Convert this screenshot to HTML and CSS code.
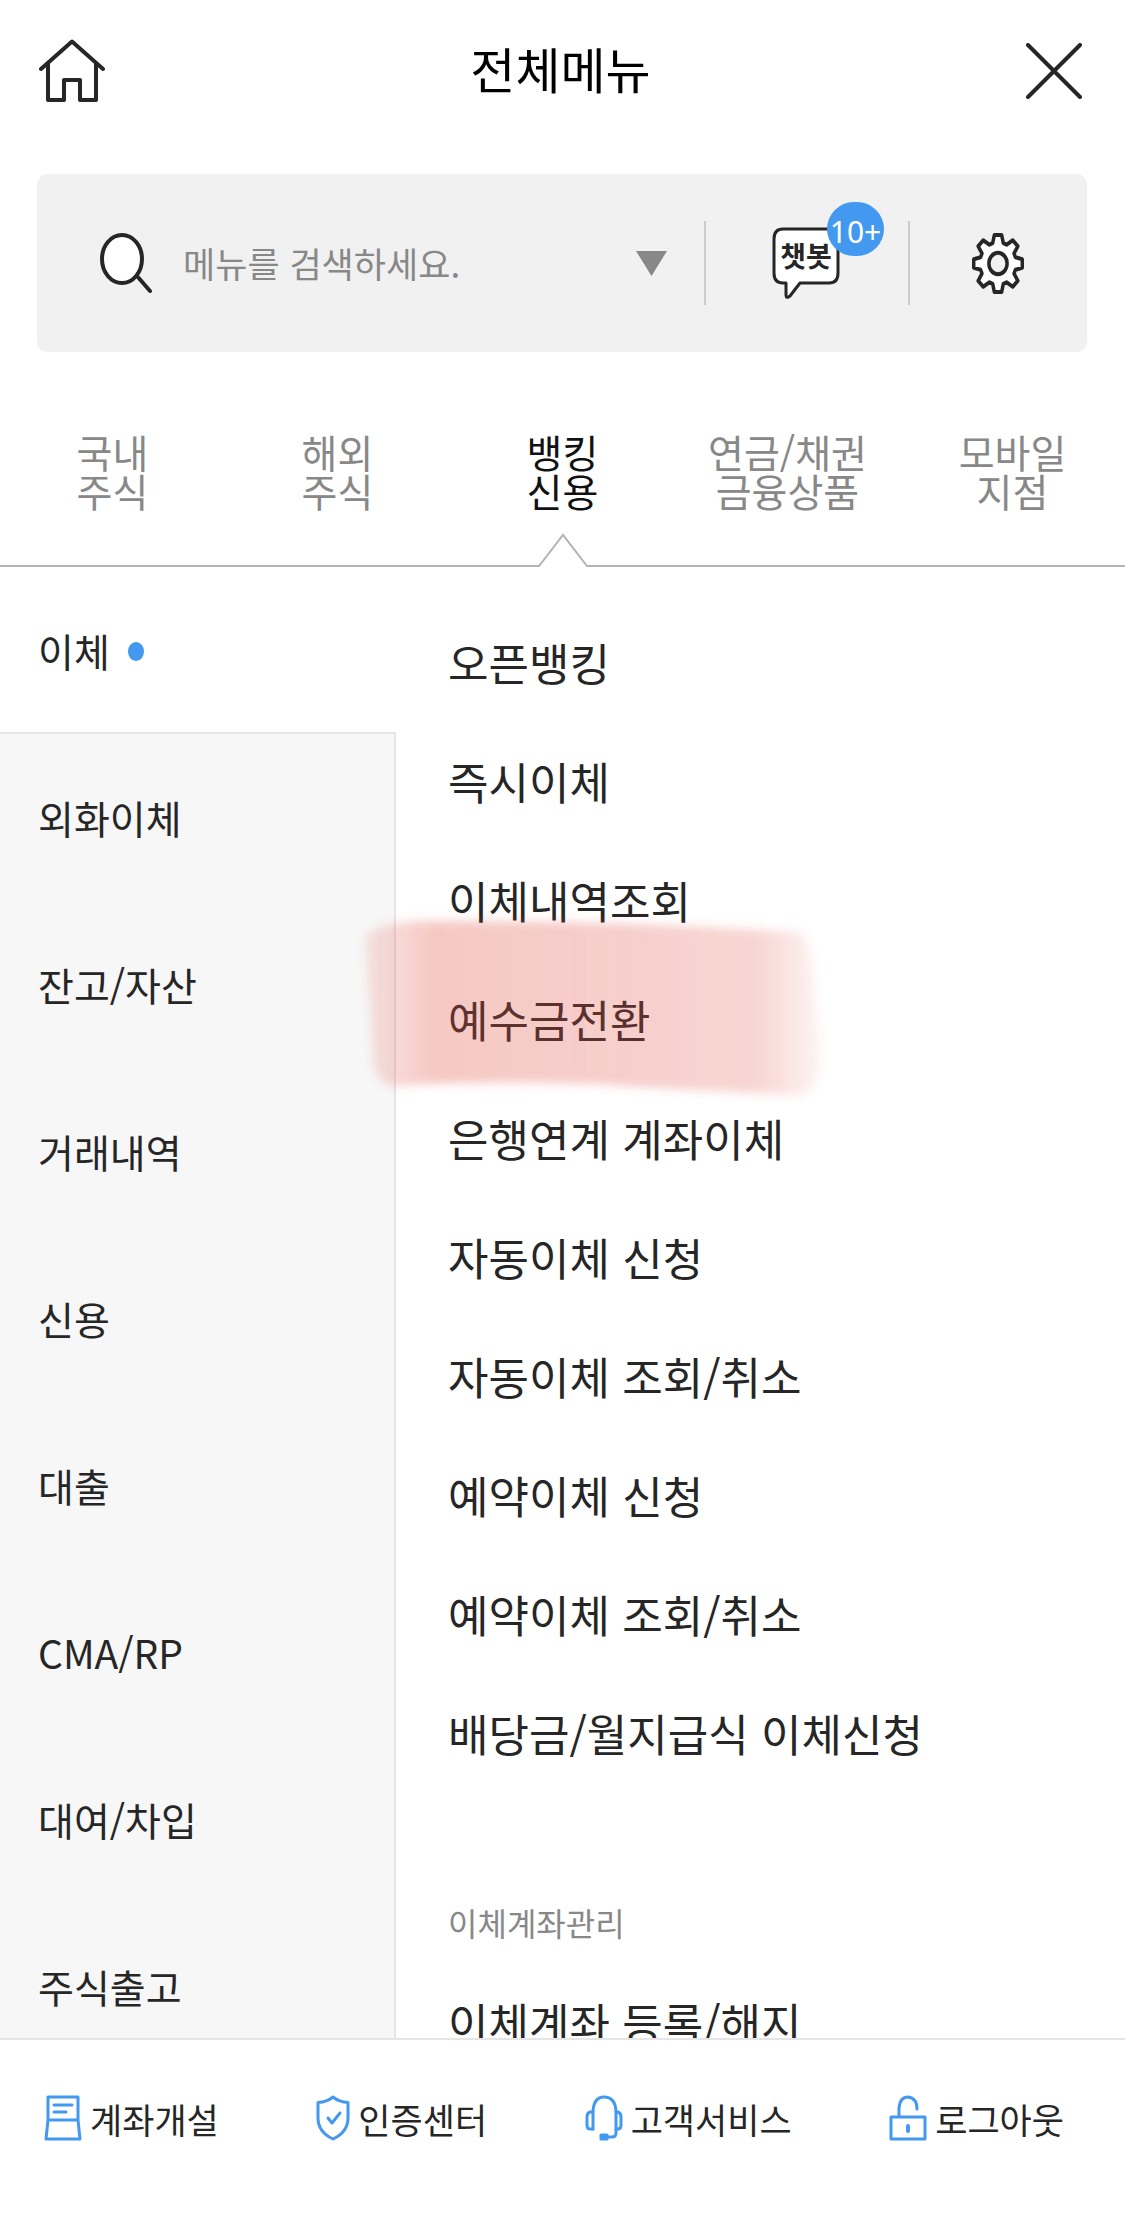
FILE: index.html
```html
<!DOCTYPE html>
<html lang="ko">
<head>
  <meta charset="UTF-8">
  <meta name="viewport" content="width=device-width, initial-scale=1.0">
  <title>전체메뉴</title>
  <link rel="stylesheet" href="styles.css">
</head>
<body>

  <header class="header">
    <a class="header-btn" href="#" aria-label="홈">
      <svg width="66" height="64" viewBox="0 0 66 64" fill="none" stroke="#262626" stroke-width="4" stroke-linecap="round" stroke-linejoin="round">
        <path d="M2 30 L33 2.500 L64 30"/>
        <path d="M9 25 V61 H25 V41 H41 V61 H57 V25"/>
      </svg>
    </a>
    <h1 class="title">전체메뉴</h1>
    <button class="header-btn close" type="button" aria-label="닫기">
      <svg width="56" height="56" viewBox="0 0 56 56" fill="none" stroke="#262626" stroke-width="4" stroke-linecap="round">
        <path d="M2 2 L54 54 M54 2 L2 54"/>
      </svg>
    </button>
  </header>

  <div class="search-bar">
    <form class="search">
      <svg width="52" height="61" viewBox="0 0 52 61" fill="none" stroke="#262626" stroke-width="4" stroke-linecap="round">
        <ellipse cx="22" cy="26" rx="20" ry="24" fill="#fff"/>
        <path d="M37 43 L50 58"/>
      </svg>
      <input class="search-input" type="text" placeholder="메뉴를 검색하세요." aria-label="메뉴 검색">
      <button class="search-toggle" type="button" aria-label="펼치기">
        <svg width="31" height="25" viewBox="0 0 31 25"><path d="M0 0 H31 L15.500 25 Z" fill="#888"/></svg>
      </button>
    </form>
    <button class="tool tool-chat" type="button">
      <span class="bubble">
        <svg width="68" height="72" viewBox="0 0 68 72" fill="#fff" stroke="#262626" stroke-width="3" stroke-linejoin="round">
          <path d="M11 2 H57 Q66 2 66 12 V46 Q66 56 57 56 H28 L18 69 Q14 72 14 68 V56 H11 Q2 56 2 46 V12 Q2 2 11 2 Z"/>
        </svg>
        <span class="bubble-text">챗봇</span>
        <span class="badge">10+</span>
      </span>
    </button>
    <button class="tool tool-settings" type="button" aria-label="설정">
      <svg width="52" height="61" viewBox="0 0 60 60" preserveAspectRatio="none" fill="#fff" stroke="#262626" stroke-width="4" stroke-linejoin="round">
        <path d="M23.900 9.900 L25.800 2 L34.200 2 L36.100 9.900 L39.900 11.500 L47 7.100 L52.900 13 L48.500 20.100 L50.100 23.900 L58 25.800 L58 34.200 L50.100 36.100 L48.500 39.900 L52.900 47 L47 52.900 L39.900 48.500 L36.100 50.100 L34.200 58 L25.800 58 L23.900 50.100 L20.100 48.500 L13 52.900 L7.100 47 L11.500 39.900 L9.900 36.100 L2 34.200 L2 25.800 L9.900 23.900 L11.500 20.100 L7.100 13 L13 7.100 L20.100 11.500 Z"/>
        <circle cx="30" cy="30" r="10.500" fill="#f1f1f1"/>
      </svg>
    </button>
  </div>

  <nav class="tabs">
    <a class="tab" href="#">국내<br>주식</a>
    <a class="tab" href="#">해외<br>주식</a>
    <a class="tab active" href="#">뱅킹<br>신용
      <svg class="tab-arrow" width="50" height="34" viewBox="0 0 50 34" fill="none" stroke="#b4b4b4" stroke-width="2">
        <path d="M0 33 H1 L25 2 L49 33 H50"/>
      </svg>
    </a>
    <a class="tab" href="#">연금/채권<br>금융상품</a>
    <a class="tab" href="#">모바일<br>지점</a>
  </nav>

  <div class="content">
    <nav class="sidebar">
      <a class="side-item active" href="#">이체<span class="dot"></span></a>
      <a class="side-item" href="#">외화이체</a>
      <a class="side-item" href="#">잔고/자산</a>
      <a class="side-item" href="#">거래내역</a>
      <a class="side-item" href="#">신용</a>
      <a class="side-item" href="#">대출</a>
      <a class="side-item" href="#">CMA/RP</a>
      <a class="side-item" href="#">대여/차입</a>
      <a class="side-item" href="#">주식출고</a>
    </nav>

    <main class="menu">
      <a class="menu-item" href="#">오픈뱅킹</a>
      <a class="menu-item" href="#">즉시이체</a>
      <a class="menu-item" href="#">이체내역조회</a>
      <a class="menu-item" href="#">예수금전환
        <!-- 형광펜 표시 -->
        <svg class="marker" width="480" height="200" viewBox="0 0 480 200">
          <defs>
            <linearGradient id="ink" x1="0" x2="1" y1="0" y2="0">
              <stop offset="0" stop-color="#e14e42" stop-opacity="0.140"/>
              <stop offset="0.150" stop-color="#e14e42" stop-opacity="0.310"/>
              <stop offset="0.600" stop-color="#e14e42" stop-opacity="0.270"/>
              <stop offset="0.860" stop-color="#e14e42" stop-opacity="0.230"/>
              <stop offset="1" stop-color="#e14e42" stop-opacity="0.060"/>
            </linearGradient>
            <filter id="soft"><feGaussianBlur stdDeviation="5"/></filter>
          </defs>
          <path d="M14 24 Q34 11 70 10 Q250 9 446 21 Q459 24 462 60 Q465 100 470 130 Q472 180 450 184 Q350 180 240 173 Q120 170 60 174 Q26 182 22 150 Z" fill="url(#ink)" filter="url(#soft)"/>
        </svg>
      </a>
      <a class="menu-item" href="#">은행연계 계좌이체</a>
      <a class="menu-item" href="#">자동이체 신청</a>
      <a class="menu-item" href="#">자동이체 조회/취소</a>
      <a class="menu-item" href="#">예약이체 신청</a>
      <a class="menu-item" href="#">예약이체 조회/취소</a>
      <a class="menu-item" href="#">배당금/월지급식 이체신청</a>
      <h2 class="menu-title">이체계좌관리</h2>
      <a class="menu-item" href="#">이체계좌 등록/해지</a>
    </main>
  </div>

  <footer class="footer">
    <a class="foot-item" href="#">
      <svg width="38" height="46" viewBox="0 0 38 46">
        <path d="M4 25 V2 H34 V25 M4 25 H34 L36 44 H2 Z"/>
        <path d="M10 10 H28 M10 17 H22"/>
      </svg>
      계좌개설
    </a>
    <a class="foot-item" href="#">
      <svg width="34" height="46" viewBox="0 0 34 46">
        <path d="M17 2 Q11 7 2 7.500 V23 Q2 37 17 44 Q32 37 32 23 V7.500 Q23 7 17 2 Z"/>
        <path d="M12 23 L16 28 L24 18"/>
      </svg>
      인증센터
    </a>
    <a class="foot-item" href="#">
      <svg width="38" height="46" viewBox="0 0 38 46">
        <path d="M8 34 V16 Q9 2 19 2 Q30 2 31 16 V38 Q31 42 27 42 H20"/>
        <path d="M8 17 H5 Q2 18 2 22 V30 Q2 34 5 34 H8 M31 17 H33 Q36 18 36 22 V30 Q36 34 33 34 H31"/>
        <rect x="16" y="40" width="6" height="4" fill="#4398f0"/>
      </svg>
      고객서비스
    </a>
    <a class="foot-item" href="#">
      <svg width="38" height="46" viewBox="0 0 38 46">
        <path d="M2 22 H36 V44 H2 Z M10 22 V13 Q11 2 19 2 Q28 3 28 14"/>
        <path d="M19 31 V36" stroke-width="4"/>
      </svg>
      로그아웃
    </a>
  </footer>

</body>
</html>
```

FILE: styles.css
```css
* {
  box-sizing: border-box;
}

body {
  display: flex;
  flex-direction: column;
  height: 100vh;
  margin: 0;
  overflow: hidden;
  background-color: #fff;
  color: #262626;
  font-family: 'Noto Sans CJK KR', sans-serif;
}

a {
  color: inherit;
  text-decoration: none;
}

button {
  padding: 0;
  border: none;
  background: none;
  color: inherit;
  font-family: inherit;
  cursor: pointer;
}

svg {
  display: block;
  flex: none;
}

/* 상단 */
.header {
  display: grid;
  grid-template-columns: 1fr auto 1fr;
  align-items: center;
  height: 142px;
  padding: 0 43px 0 39px;
}

.close {
  justify-self: end;
}

.title {
  margin: 0;
  padding-bottom: 6px;
  color: #000;
  font-size: 49px;
  font-weight: 400;
  line-height: 70px;
}

/* 검색 */
.search-bar {
  display: flex;
  height: 178px;
  margin: 32px 38px 0 37px;
  border-radius: 10px;
  background-color: #f1f1f1;
}

.search {
  display: flex;
  flex: 1;
  align-items: center;
  min-width: 0;
  padding: 0 37px 0 63px;
}

.search-input {
  flex: 1;
  min-width: 0;
  margin-left: 31px;
  padding: 0;
  border: none;
  outline: none;
  background: none;
  color: #262626;
  font-family: inherit;
  font-size: 35px;
  line-height: 52px;
}

.search-input::placeholder {
  color: #888;
  opacity: 1;
}

.tool {
  display: flex;
  position: relative;
  align-items: center;
  justify-content: center;
}

.tool::before {
  content: '';
  position: absolute;
  left: 0;
  width: 2px;
  height: 84px;
  background-color: #ccc;
}

.tool-chat {
  width: 204px;
}

.tool-settings {
  width: 179px;
}

.bubble {
  position: relative;
}

.bubble-text {
  position: absolute;
  top: 8px;
  left: 0;
  width: 100%;
  font-size: 28px;
  font-weight: 700;
  line-height: 40px;
  text-align: center;
}

.badge {
  position: absolute;
  top: -25px;
  left: 55px;
  width: 57px;
  height: 54px;
  border-radius: 27px;
  background-color: #4398f0;
  color: #fff;
  font-family: 'Noto Sans', sans-serif;
  font-size: 30px;
  line-height: 60px;
  text-align: center;
}

/* 탭 */
.tabs {
  display: grid;
  grid-template-columns: repeat(5, 1fr);
  border-bottom: 2px solid #b4b4b4;
}

.tab {
  position: relative;
  padding: 80px 0 55px;
  color: #888;
  font-size: 39px;
  line-height: 39px;
  text-align: center;
}

.tab.active {
  color: #111;
}

/* 흰 배경이 탭 아래 선을 가린다 */
.tab-arrow {
  position: absolute;
  bottom: -2px;
  left: 50%;
  margin-left: -25px;
  background-color: #fff;
}

/* 본문 */
.content {
  display: flex;
  flex: 1;
  min-height: 0;
  overflow: hidden;
}

.sidebar {
  width: 396px;
  border-right: 2px solid #e5e5e5;
  background-color: #f7f7f7;
}

.side-item {
  display: flex;
  align-items: center;
  height: 167px;
  padding: 0 0 2px 38px;
  font-size: 39px;
}

/* 선택된 항목은 오른쪽 테두리까지 덮는다 */
.side-item.active {
  margin-right: -2px;
  padding-bottom: 0;
  border-bottom: 2px solid #e5e5e5;
  background-color: #fff;
}

.dot {
  width: 16px;
  height: 19px;
  margin: 4px 0 0 18px;
  border-radius: 50%;
  background-color: #4398f0;
}

.menu {
  flex: 1;
  padding: 36px 0 0 52px;
}

.menu-item {
  display: block;
  position: relative;
  font-size: 44px;
  line-height: 119px;
}

.marker {
  position: absolute;
  top: -49px;
  left: -97px;
  pointer-events: none;
}

.menu-title {
  margin: 88px 0 0;
  color: #888;
  font-size: 32px;
  font-weight: 400;
  line-height: 82px;
}

/* 하단 */
.footer {
  display: flex;
  justify-content: space-between;
  height: 188px;
  padding: 52px 61px 0 44px;
  border-top: 2px solid #e5e5e5;
}

.foot-item {
  display: flex;
  align-items: center;
  gap: 8px;
  height: 52px;
  font-size: 35px;
}

.foot-item svg {
  fill: none;
  stroke: #4398f0;
  stroke-width: 3;
  stroke-linecap: round;
  stroke-linejoin: round;
}
```
